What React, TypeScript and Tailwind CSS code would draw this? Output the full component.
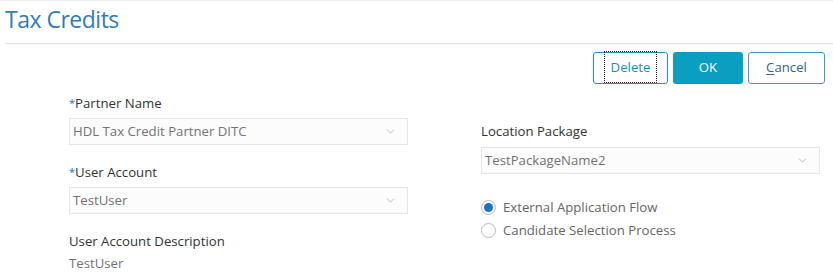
import { ChevronDown } from 'lucide-react';

function Label({ text, required }: { text: string; required?: boolean }) {
  return (
    <div className="text-[13.2px] text-[#333] leading-5">
      {required && <span className="text-[#1f6fb3] text-[11px] align-top">*</span>}
      {text}
    </div>
  );
}

function Select({ value }: { value: string }) {
  return (
    <div className="flex h-[27px] items-center justify-between border border-[#e3e5e8] bg-[#fcfcfd] pl-[3px] pr-[10px]">
      <span className="text-[13.2px] text-[#737373]">{value}</span>
      <ChevronDown size={13} strokeWidth={1.2} className="text-[#999]" />
    </div>
  );
}

function Radio({ label, checked }: { label: string; checked?: boolean }) {
  return (
    <label className="flex h-[23px] items-center gap-[7px]">
      <span className="flex h-[15px] w-[15px] items-center justify-center rounded-full border border-[#b9bcc0] bg-white">
        {checked && <span className="h-[9px] w-[9px] rounded-full bg-[#1a73c8]" />}
      </span>
      <span className="text-[13.2px] text-[#666]">{label}</span>
    </label>
  );
}

export default function App() {
  return (
    <div
      className="h-[273px] w-[833px] overflow-hidden bg-white border-t border-[#eceef0]"
      style={{ fontFamily: '"Open Sans", "Noto Sans", sans-serif' }}
    >
      {/* Header */}
      <div className="ml-[5px] border-b border-[#dcdfe3] pt-[3px] pb-[9px]">
        <h1 className="text-[23px] leading-[30px] text-[#2e7cc0] tracking-[-0.5px]">Tax Credits</h1>
      </div>

      {/* Toolbar */}
      <div className="flex justify-end gap-[5px] pr-[8px] pt-[8px]">
        <button className="h-[32px] w-[75px] rounded-[3px] border border-[#1a97b5] text-[13.2px] text-[#1a8fb0]">
          <span className="border border-dotted border-[#222] px-[6px] py-[6px]">Delete</span>
        </button>
        <button className="h-[32px] w-[70px] rounded-[3px] bg-[#0a9ec0] text-[13.2px] text-white">OK</button>
        <button className="h-[32px] w-[77px] rounded-[3px] border border-[#3f9cb3] text-[13.2px] text-[#2f6784]">
          <span className="underline underline-offset-2 decoration-1">C</span>ancel
        </button>
      </div>

      {/* Form */}
      <div className="grid grid-cols-[339px_339px] gap-x-[73px] pl-[69px]">
        <div className="flex flex-col">
          <div className="mt-[9px]">
            <Label text="Partner Name" required />
            <div className="mt-[5px]"><Select value="HDL Tax Credit Partner DITC" /></div>
          </div>
          <div className="mt-[17px]">
            <Label text="User Account" required />
            <div className="mt-[5px]"><Select value="TestUser" /></div>
          </div>
          <div className="mt-[17px]">
            <Label text="User Account Description" />
            <div className="mt-[3px] text-[13.2px] text-[#737373]">TestUser</div>
          </div>
        </div>
        <div className="flex flex-col pt-[37px]">
          <Label text="Location Package" />
          <div className="mt-[6px]"><Select value="TestPackageName2" /></div>
          <div className="mt-[22px] flex flex-col">
            <Radio label="External Application Flow" checked />
            <Radio label="Candidate Selection Process" />
          </div>
        </div>
      </div>
    </div>
  );
}
